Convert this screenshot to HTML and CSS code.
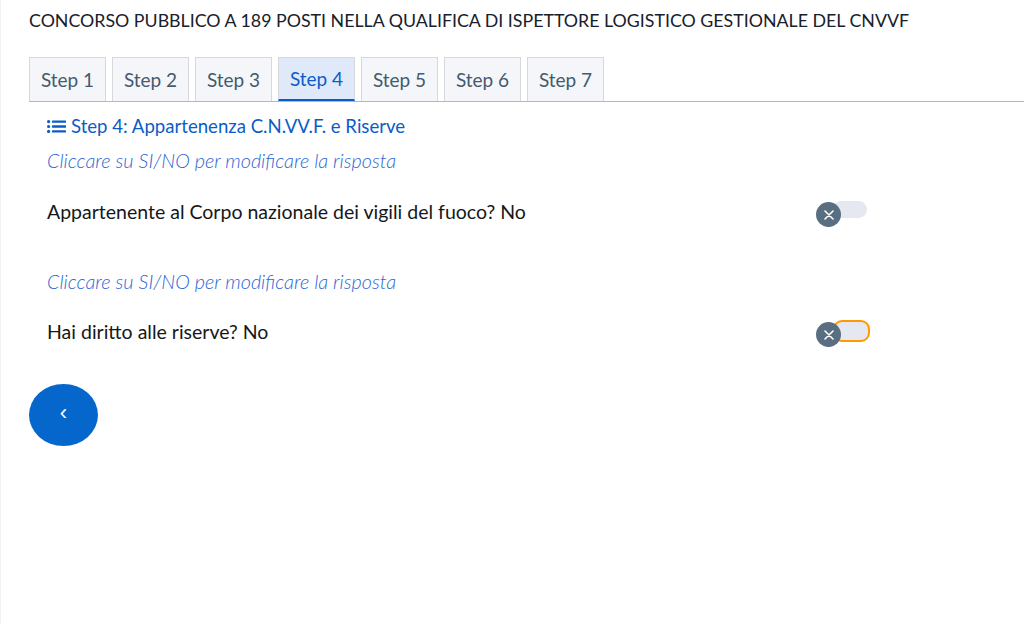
FILE: index.html
```html
<!DOCTYPE html>
<html lang="it">
<head>
    <meta charset="UTF-8">
    <meta name="viewport" content="width=device-width, initial-scale=1.0">
    <title>Domanda di partecipazione - Step 4</title>
    <link rel="stylesheet" href="styles.css">
</head>
<body>

    <div class="page">
        <h1 class="concorso-title">CONCORSO PUBBLICO A 189 POSTI NELLA QUALIFICA DI ISPETTORE LOGISTICO GESTIONALE DEL CNVVF</h1>

        <!-- Passi della domanda -->
        <nav class="steps">
            <a href="#" class="step-tab">Step 1</a>
            <a href="#" class="step-tab">Step 2</a>
            <a href="#" class="step-tab">Step 3</a>
            <a href="#" class="step-tab active">Step 4</a>
            <a href="#" class="step-tab">Step 5</a>
            <a href="#" class="step-tab">Step 6</a>
            <a href="#" class="step-tab">Step 7</a>
        </nav>

        <div class="step-body">
            <h2 class="step-heading">
                <svg class="list-icon" viewBox="0 0 19 13" width="19" height="13">
                    <circle cx="1.6" cy="1.6" r="1.6"/>
                    <circle cx="1.6" cy="6.5" r="1.6"/>
                    <circle cx="1.6" cy="11.4" r="1.6"/>
                    <rect x="5" y="0.4" width="14" height="2.4" rx="0.5"/>
                    <rect x="5" y="5.3" width="14" height="2.4" rx="0.5"/>
                    <rect x="5" y="10.2" width="14" height="2.4" rx="0.5"/>
                </svg>
                Step 4: Appartenenza C.N.VV.F. e Riserve
            </h2>

            <p class="hint">Cliccare su SI/NO per modificare la risposta</p>
            <div class="question">
                <span>Appartenente al Corpo nazionale dei vigili del fuoco? No</span>
                <span class="toggle">
                    <span class="track"></span>
                    <span class="knob">
                        <svg viewBox="0 0 10 10" width="10" height="10"><path d="M1 1L9 9M9 1L1 9"/></svg>
                    </span>
                </span>
            </div>

            <p class="hint second">Cliccare su SI/NO per modificare la risposta</p>
            <div class="question second">
                <span>Hai diritto alle riserve? No</span>
                <span class="toggle focused">
                    <span class="track"></span>
                    <span class="knob">
                        <svg viewBox="0 0 10 10" width="10" height="10"><path d="M1 1L9 9M9 1L1 9"/></svg>
                    </span>
                </span>
            </div>
        </div>

        <button class="back-btn" type="button">&#x2039;</button>
    </div>

</body>
</html>
```

FILE: styles.css
```css
body {
    font-family: Lato, "Open Sans", sans-serif;
    margin: 0;
    padding: 0;
    background-color: #ffffff;
    color: #1b1d20;
}
.page {
    padding: 9px 0 0 28px;
    border-left: 1px solid #f2f2f2;
    min-height: 615px;
}
.concorso-title {
    font-size: 17.8px;
    font-weight: 400;
    margin: 0;
    line-height: 22px;
    color: #17202b;
}
.steps {
    display: flex;
    gap: 6px;
    margin-top: 26px;
    border-bottom: 1px solid #b3b8bd;
}
.step-tab {
    width: 77px;
    height: 44px;
    box-sizing: border-box;
    display: flex;
    align-items: center;
    justify-content: center;
    background-color: #f5f6f9;
    border: 1px solid #d6d9dc;
    border-bottom: none;
    color: #435a6f;
    font-size: 19px;
    text-decoration: none;
}
.step-tab.active {
    background-color: #dfe9fa;
    color: #0b5cc8;
    border-bottom: 2px solid #0b5cc8;
}
.step-body {
    padding-left: 18px;
    width: 823px;
}
.step-heading {
    display: flex;
    align-items: center;
    gap: 5px;
    margin: 12px 0 0;
    font-size: 18.6px;
    font-weight: 400;
    line-height: 24px;
    color: #0b5cc8;
}
.list-icon {
    fill: #0b5cc8;
}
.hint {
    margin: 10px 0 0;
    font-size: 19.8px;
    font-style: italic;
    font-weight: 300;
    line-height: 24px;
    color: #2c66d4;
}
.hint.second {
    margin-top: 44px;
}
.question {
    display: flex;
    justify-content: space-between;
    align-items: center;
    margin-top: 27px;
    font-size: 19.5px;
    line-height: 26px;
    color: #151719;
}
.question.second {
    margin-top: 26px;
}
.toggle {
    position: relative;
    width: 54px;
    height: 26px;
}
.track {
    position: absolute;
    left: 17px;
    top: 2px;
    width: 34px;
    height: 17px;
    border-radius: 9px;
    background-color: #e5e8f1;
}
.toggle.focused .track {
    top: 1px;
    width: 33px;
    height: 18px;
    border: 2px solid #ff9900;
}
.knob {
    position: absolute;
    left: 0;
    top: 3px;
    width: 25px;
    height: 25px;
    border-radius: 50%;
    background-color: #5a6e82;
    display: flex;
    align-items: center;
    justify-content: center;
}
.knob svg {
    stroke: #ffffff;
    stroke-width: 1.6;
    stroke-linecap: round;
}
.back-btn {
    display: flex;
    align-items: center;
    justify-content: center;
    margin-top: 39px;
    width: 69px;
    height: 62px;
    border: none;
    border-radius: 50%;
    background-color: #0566cc;
    color: #ffffff;
    font-size: 22px;
    padding: 0 0 4px;
    cursor: pointer;
}
```
